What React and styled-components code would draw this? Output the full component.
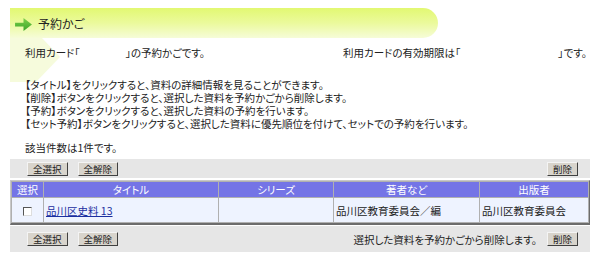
import React from "react";
import styled, { createGlobalStyle } from "styled-components";

const GlobalStyle = createGlobalStyle`
  body {
    margin: 0;
    background: #fff;
    font-family: "Noto Sans CJK JP", "Noto Sans", sans-serif;
    color: #222;
  }
`;

const App = () => {
  return (
    <>
      <GlobalStyle />
      <Page>
        <Chevron viewBox="0 0 60 46" aria-hidden="true">
          <polygon points="0,0 32,0 50,19 26,44 0,44" fill="#f6fbdc" />
        </Chevron>
        <Banner>
          <ArrowIcon viewBox="0 0 20 16">
            <defs>
              <linearGradient id="ag" x1="0" y1="0" x2="0" y2="1">
                <stop offset="0" stopColor="#7fd14a" />
                <stop offset="1" stopColor="#3aa52a" />
              </linearGradient>
            </defs>
            <path d="M1 6 H10 V1 L19 8 L10 15 V10 H1 Z" fill="url(#ag)" />
          </ArrowIcon>
          <BannerTitle>予約かご</BannerTitle>
        </Banner>
        <Body>
          <CardRow>
            <span>
              利用カード「<Blank $w={46} />」の予約かごです。
            </span>
            <span>
              利用カードの有効期限は「<Blank $w={98} />」です。
            </span>
          </CardRow>
          <Notes>
            <p>【タイトル】をクリックすると、資料の詳細情報を見ることができます。</p>
            <p>【削除】ボタンをクリックすると、選択した資料を予約かごから削除します。</p>
            <p>【予約】ボタンをクリックすると、選択した資料の予約を行います。</p>
            <p>【セット予約】ボタンをクリックすると、選択した資料に優先順位を付けて、セットでの予約を行います。</p>
          </Notes>
          <Count>該当件数は1件です。</Count>
        </Body>
        <Toolbar>
          <Group>
            <Btn>全選択</Btn>
            <Btn>全解除</Btn>
          </Group>
          <Btn>削除</Btn>
        </Toolbar>
        <Table>
          <colgroup>
            <col style={{ width: 31 }} />
            <col style={{ width: 174 }} />
            <col style={{ width: 114 }} />
            <col style={{ width: 145 }} />
            <col />
          </colgroup>
          <thead>
            <tr>
              <Th>選択</Th>
              <Th>タイトル</Th>
              <Th>シリーズ</Th>
              <Th>著者など</Th>
              <Th>出版者</Th>
            </tr>
          </thead>
          <tbody>
            <tr>
              <Td $center>
                <Check />
              </Td>
              <Td>
                <TitleLink href="#">品川区史料 13</TitleLink>
              </Td>
              <Td></Td>
              <Td>品川区教育委員会／編</Td>
              <Td>品川区教育委員会</Td>
            </tr>
          </tbody>
        </Table>
        <Toolbar $tall>
          <Group>
            <Btn>全選択</Btn>
            <Btn>全解除</Btn>
          </Group>
          <Group>
            <Hint>選択した資料を予約かごから削除します。</Hint>
            <Btn>削除</Btn>
          </Group>
        </Toolbar>
      </Page>
    </>
  );
};

const Page = styled.div`
  position: relative;
  width: 580px;
  padding: 8px 10px 0;
`;
const Chevron = styled.svg`
  position: absolute;
  left: 10px;
  top: 38px;
  width: 60px;
  height: 46px;
  z-index: 0;
`;
const Banner = styled.div`
  position: relative;
  z-index: 1;
  width: 428px;
  height: 30px;
  display: flex;
  align-items: center;
  gap: 5px;
  padding-left: 4px;
  box-sizing: border-box;
  border-radius: 0 15px 15px 0;
  background: linear-gradient(to bottom, #e2f872 0%, #ebfa9c 50%, #f6fcd8 100%);
`;
const ArrowIcon = styled.svg`
  width: 19px;
  height: 15px;
  margin-top: 2px;
`;
const BannerTitle = styled.span`
  font-size: 12px;
  color: #222;
  margin-top: 1px;
  font-feature-settings: "palt";
`;
const Body = styled.div`
  position: relative;
  z-index: 1;
  padding-left: 15px;
  font-size: 10.5px;
  line-height: 13px;
  font-feature-settings: "palt";
  white-space: nowrap;
`;
const CardRow = styled.div`
  display: grid;
  grid-template-columns: 318px auto;
  margin-top: 8px;
`;
const Blank = styled.span`
  display: inline-block;
  width: ${(p) => p.$w}px;
`;
const Notes = styled.div`
  margin-top: 19px;
  p {
    margin: 0;
  }
`;
const Count = styled.div`
  margin-top: 11px;
`;
const Toolbar = styled.div`
  display: flex;
  justify-content: space-between;
  align-items: center;
  height: ${(p) => (p.$tall ? 26 : 19)}px;
  margin-top: ${(p) => (p.$tall ? 1 : 5)}px;
  padding: 0 12px 0 17px;
  background: #e6e6e6;
  font-size: 10px;
`;
const Group = styled.div`
  display: flex;
  align-items: center;
  gap: 10px;
`;
const Btn = styled.button`
  height: 14px;
  padding: 0 5px;
  font-family: inherit;
  font-size: 9.5px;
  line-height: 12px;
  color: #222;
  background: #d8d4cc;
  border: 1px solid;
  border-color: #f4f4f4 #404040 #404040 #f4f4f4;
  cursor: pointer;
`;
const Hint = styled.span`
  font-size: 10.5px;
  color: #222;
  font-feature-settings: "palt";
`;
const Table = styled.table`
  width: 580px;
  margin-top: 2px;
  border-collapse: separate;
  border-spacing: 1px;
  background: #b0b0b0;
  border: 1px solid;
  border-color: #c8c8c8 #6c6c6c #6c6c6c #c8c8c8;
  border-bottom-width: 2px;
  table-layout: fixed;
  font-size: 10.5px;
  font-feature-settings: "palt";
`;
const Th = styled.th`
  height: 15px;
  padding: 0;
  background: #7474e6;
  color: #fff;
  font-weight: normal;
  text-align: center;
`;
const Td = styled.td`
  height: 24px;
  padding: 0 2px;
  background: #eef3ff;
  text-align: ${(p) => (p.$center ? "center" : "left")};
  color: #222;
`;
const Check = styled.span`
  display: inline-block;
  width: 7px;
  height: 7px;
  border: 1px solid;
  border-color: #555 #ddd #ddd #555;
  background: #fff;
  vertical-align: middle;
`;
const TitleLink = styled.a`
  color: #1b2fa0;
  text-decoration: underline;
`;

export default App;
